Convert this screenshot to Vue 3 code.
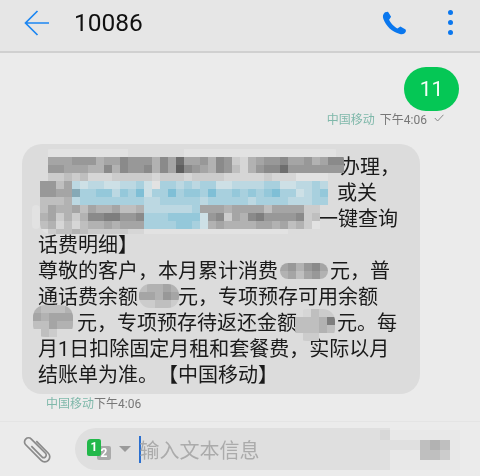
<script setup>
const palette = {
  0: '#5e5e5e', 1: '#6e6e6e', 2: '#7e7e7e', 3: '#8a8a8a', 4: '#989898',
  5: '#a5a5a5', 6: '#b2b2b2', 7: '#bfbfbf', 8: '#cccccc', 9: '#d6d6d6',
  a: '#7fbfd6', b: '#94c8da', c: '#a8d0de', d: '#bcd8e2', e: '#cde0e6',
  f: '#e2e2e2', x: '#86a9b6', g: '#e8e8e8', h: '#e0e0e0', i: '#d8d8d8', '.': 'transparent'
}

const lines = [
  [302, '办理，'],
  [299, '或关'],
  [280, '一键查询'],
  ['话费明细】'],
  ['尊敬的客户，本月累计消费', 52, '元，普'],
  ['通话费余额', 40, '元，专项预存可用余额'],
  [39, '元，专项预存待返还金额', 40, '元。每'],
  ['月1日扣除固定月租和套餐费，实际以月'],
  ['结账单为准。【中国移动】']
]

const makeMask = m => ({ ...m, rows: m.rows.map(r => r.replace(/ /g, '')) })

const masks = [
  { left: 10, top: 61, radius: 8, rows: ['f', 'f', 'f'] },
  {
    left: 18, top: 5, radius: 10, height: 85,
    rows: [
      '.ffffffffff.......fffffffffffffffffff.',
      '.5554446553444635155463489654435546533',
      '.4455566363443635034563479643314444444',
      '.887879998888898889888899999899 9ffff..',
      '4475 dedd eedd cefc cdcd ccee dddd ccee ddcd ..',
      '4455 xccb bdbc aecc acbb cacc bcbc bacc edcb ..',
      '7776 dccc cccc cddc cccc dccc ccdc cccd ddcc ..',
      '7566 5756 6577 6ddd dddc 5556 5555 7555 588. ..',
      '6586 8633 2244 3ccc bbbb e438 5632 4444 387. ..',
      '7697 9766 5655 5ccc cbbc e656 6665 5657 68f. ..',
      'f877 6788 8889 9fff ffff ffff ffff fff. .... ..'
    ]
  },
  { left: 258, top: 119, radius: 8, rows: ['546435', '657546'] },
  { left: 117, top: 140, radius: 11, rows: ['76656', '55645', '88778'] },
  { left: 11, top: 161, radius: 12, rows: ['67776', '56555', '77566', '.78..'] },
  { left: 273, top: 165, radius: 12, rows: ['.9788', '77762', '77767', '.88..'] }
].map(makeMask)

const inputMask = makeMask({ rows: ['i ggg gggg', 'hhhh 767g', 'hggg 778g', 'hggg gggg'] })
const colour = c => palette[c]
const cols = rows => rows[0].length
</script>

<template>
  <div class="screen">
    <header class="topbar">
      <svg class="back" viewBox="0 0 26 26" width="26" height="26">
        <path d="M25 13H1.5M13.5 1 1.5 13l12 12" fill="none" stroke="#1c86f2" stroke-width="1.7" />
      </svg>
      <h1 class="title">10086</h1>
      <svg class="phone" viewBox="0 0 25 24" width="25" height="24">
        <path d="M3 1.2C1 3 .4 5.2 1.4 8 4 15 10 21 18 23c3 .6 5-.4 6-3l-.4-1.6-5.2-3-3 2c-3.4-1.5-6.8-5.4-8.3-8.6l2-3L6 .8z" fill="#0a77ee" />
      </svg>
      <div class="dots"><i></i><i></i><i></i></div>
    </header>

    <main class="thread">
      <div class="sent">11</div>
      <div class="meta meta-sent">
        <span class="carrier">中国移动</span>
        <span>下午4:06</span>
        <svg viewBox="0 0 10 8" width="10" height="8" class="check">
          <path d="M.8 4 3.6 7 9.4.8" fill="none" stroke="#888" stroke-width="1" />
        </svg>
      </div>

      <div class="received">
        <div v-for="(line, i) in lines" :key="i" class="line">
          <template v-for="(part, j) in line" :key="j">
            <span v-if="typeof part === 'number'" class="gap" :style="{ width: part + 'px' }"></span>
            <span v-else>{{ part }}</span>
          </template>
        </div>
        <div
          v-for="(m, i) in masks"
          :key="'m' + i"
          class="mosaic"
          :style="{
            left: m.left + 'px',
            top: m.top + 'px',
            height: m.height ? m.height + 'px' : 'auto',
            borderRadius: m.radius + 'px',
            gridTemplateColumns: `repeat(${cols(m.rows)}, 8px)`,
            gridAutoRows: '8px'
          }"
        >
          <template v-for="(row, r) in m.rows" :key="r">
            <b v-for="(c, k) in row.split('')" :key="k" :style="{ background: colour(c) }"></b>
          </template>
        </div>
      </div>
      <div class="meta meta-received">
        <span class="carrier">中国移动</span><span>下午4:06</span>
      </div>
    </main>

    <footer class="composer">
      <svg class="clip" viewBox="-18 -18 36 36" width="36" height="36">
        <path
          transform="rotate(-45)"
          d="M-2-6V9a2.5 2.5 0 0 0 5 0V-11a4 4 0 0 0-8 0V11a5 5 0 0 0 10 0V-6"
          fill="none"
          stroke="#8a8a8a"
          stroke-width="1.7"
        />
      </svg>
      <div class="pill">
        <div class="sim">
          <span class="sim-two">2</span>
          <span class="sim-one">1</span>
        </div>
        <span class="caret"></span>
        <span class="cursor"></span>
        <span class="placeholder">输入文本信息</span>
      </div>
      <div
        class="mosaic input-mask"
        :style="{ gridTemplateColumns: `repeat(${cols(inputMask.rows)}, 10px)`, gridAutoRows: '10px' }"
      >
        <template v-for="(row, r) in inputMask.rows" :key="r">
          <b v-for="(c, k) in row.split('')" :key="k" :style="{ background: colour(c) }"></b>
        </template>
      </div>
    </footer>
  </div>
</template>

<style scoped>
.screen {
  width: 480px;
  height: 476px;
  display: flex;
  flex-direction: column;
  overflow: hidden;
  background: #ebebeb;
  color: #1a1a1a;
  font-family: Roboto, "Noto Sans CJK SC", sans-serif;
  filter: blur(0.35px);
  text-spacing-trim: space-all;
}

.topbar {
  flex: none;
  height: 45px;
  display: flex;
  align-items: center;
  background: #e6e6e6;
  border-bottom: 2px solid #d0d0d0;
  padding: 0 27px 6px 24px;
}
.back { flex: none; }
.title {
  margin: 0 0 0 24px;
  font-size: 24.5px;
  font-weight: 400;
  color: #111;
  flex: 1;
}
.phone { flex: none; }
.dots {
  margin-left: 41px;
  display: flex;
  flex-direction: column;
  gap: 5px;
}
.dots i {
  width: 5px;
  height: 5px;
  border-radius: 50%;
  background: #0a77ee;
}

.thread {
  flex: 1;
  display: flex;
  flex-direction: column;
  padding: 14px 21px 0 22px;
  min-height: 0;
}
.sent {
  align-self: flex-end;
  width: 55px;
  height: 44px;
  border-radius: 22px;
  background: #05c755;
  color: #f4fff8;
  font-size: 21px;
  line-height: 44px;
  text-align: center;
}
.meta {
  display: flex;
  align-items: center;
  height: 16px;
  font-size: 12px;
  color: #777;
}
.carrier { color: #7fb8aa; }
.meta-sent {
  justify-content: flex-end;
  gap: 5px;
  padding-right: 15px;
  margin-top: -1px;
}
.check { margin-left: 2px; }

.received {
  position: relative;
  margin-top: 18px;
  width: 398px;
  box-sizing: border-box;
  padding: 10px 0 6px 16px;
  background: #dcdcdc;
  border-radius: 20px;
  font-size: 20px;
  line-height: 26px;
}
.line {
  white-space: nowrap;
  height: 26px;
}
.gap { display: inline-block; }
.mosaic {
  position: absolute;
  display: grid;
  overflow: hidden;
  filter: blur(0.5px);
}
.mosaic b { display: block; }
.meta-received {
  padding-left: 24px;
}

.composer {
  position: relative;
  flex: none;
  display: flex;
  align-items: center;
  border-top: 1px solid #e4e4e4;
  background: #ebebeb;
  padding: 6px 0 6px 19px;
}
.clip { flex: none; }
.pill {
  margin-left: 20px;
  width: 315px;
  height: 42px;
  display: flex;
  align-items: center;
  padding-left: 12px;
  box-sizing: border-box;
  border-radius: 21px 0 0 21px;
  background: #dfdfdf;
}
.sim {
  position: relative;
  flex: none;
  width: 24px;
  height: 21px;
}
.sim-one, .sim-two {
  position: absolute;
  display: block;
  text-align: center;
  color: #fff;
  font-weight: 700;
  font-size: 12px;
}
.sim-one {
  left: 0;
  top: 0;
  width: 14px;
  height: 17px;
  line-height: 16px;
  background: #22b84a;
  border-radius: 4px 2px 2px 2px;
}
.sim-two {
  left: 10px;
  top: 7px;
  width: 14px;
  height: 14px;
  line-height: 14px;
  background: #aaaaaa;
  border-radius: 2px;
}
.caret {
  flex: none;
  margin-left: 8px;
  width: 0;
  height: 0;
  border-left: 6px solid transparent;
  border-right: 6px solid transparent;
  border-top: 6px solid #9a9a9a;
}
.cursor {
  flex: none;
  margin-left: 8px;
  width: 1.5px;
  height: 27px;
  background: #2a6fd0;
}
.placeholder {
  font-size: 20px;
  color: #ababab;
  margin-left: -1px;
}
.input-mask {
  left: 380px;
  top: 8px;
}
</style>

<style>
html, body { background: #fff; }
</style>
